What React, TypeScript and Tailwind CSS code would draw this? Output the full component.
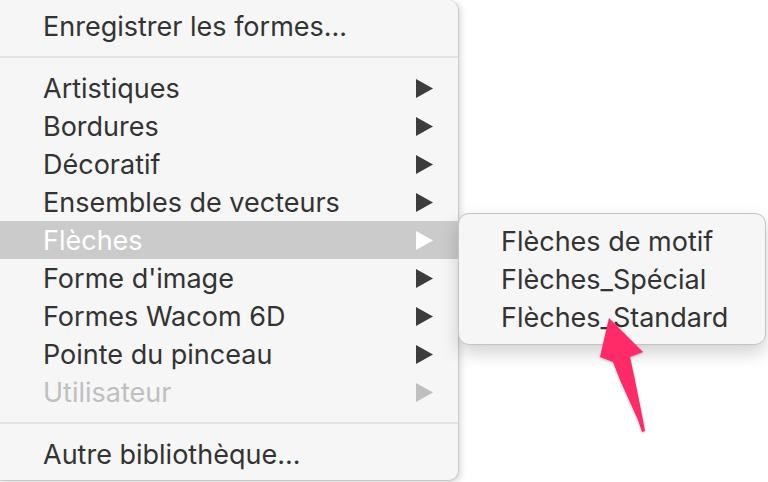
import React from "react"

type Item = { label: string; sub?: boolean; active?: boolean; disabled?: boolean }

const groups: Item[][] = [
  [{ label: "Enregistrer les formes..." }],
  [
    { label: "Artistiques", sub: true },
    { label: "Bordures", sub: true },
    { label: "Décoratif", sub: true },
    { label: "Ensembles de vecteurs", sub: true },
    { label: "Flèches", sub: true, active: true },
    { label: "Forme d'image", sub: true },
    { label: "Formes Wacom 6D", sub: true },
    { label: "Pointe du pinceau", sub: true },
    { label: "Utilisateur", sub: true, disabled: true },
  ],
  [{ label: "Autre bibliothèque..." }],
]

const subItems = ["Flèches de motif", "Flèches_Spécial", "Flèches_Standard"]

function Caret({ color }: { color: string }) {
  return (
    <svg width="17" height="19" viewBox="0 0 17 19">
      <path d="M0 0 L17 9.5 L0 19 Z" fill={color} />
    </svg>
  )
}

function Row({ item }: { item: Item }) {
  const text = item.active ? "text-white" : item.disabled ? "text-[#bfbfbf]" : "text-[#333333]"
  const caret = item.active ? "#ffffff" : item.disabled ? "#bfbfbf" : "#3c3c3c"
  return (
    <div
      className={`flex h-[38px] items-center justify-between pl-[43px] pr-[25px] ${item.active ? "bg-[#cbcbcb]" : ""}`}
    >
      <span className={`${text} leading-none`}>{item.label}</span>
      {item.sub && <Caret color={caret} />}
    </div>
  )
}

export default function App() {
  return (
    <div
      className="relative h-[482px] w-[768px] overflow-hidden bg-white text-[27px]"
      style={{ fontFamily: "Inter, 'Liberation Sans', sans-serif" }}
    >
      <div className="flex h-[481px] w-[459px] flex-col rounded-r-[10px] border-r border-b border-[#c9c9c9] bg-[#f6f6f6] pt-[7px] shadow-[2px_2px_6px_rgba(0,0,0,0.15)]">
        {groups.map((g, gi) => (
          <div key={gi}>
            {gi > 0 && (
              <div className="flex h-[24px] items-center">
                <div className="h-[2px] w-full bg-[#e3e3e3]" />
              </div>
            )}
            {g.map((it) => (
              <Row key={it.label} item={it} />
            ))}
          </div>
        ))}
      </div>

      <div className="absolute left-[458px] top-[213px] w-[308px] rounded-[11px] border border-[#c4c4c4] bg-[#f6f6f6] py-[8px] shadow-[0_8px_18px_rgba(0,0,0,0.18)]">
        {subItems.map((s) => (
          <div key={s} className="flex h-[38px] items-center pl-[42px] text-[#333333]">
            <span className="leading-none">{s}</span>
          </div>
        ))}
      </div>

      <svg className="absolute left-0 top-0" width="768" height="482" viewBox="0 0 768 482">
        <path
          d="M609 318 L643 352 L630 357 L635 380 L643 420 L645 431 L642 432 L638 420 L620 380 L613 362 L600 357 Z"
          fill="#ff2a68"
          style={{ filter: "drop-shadow(0 1px 1px rgba(0,0,0,0.25))" }}
        />
      </svg>
    </div>
  )
}
